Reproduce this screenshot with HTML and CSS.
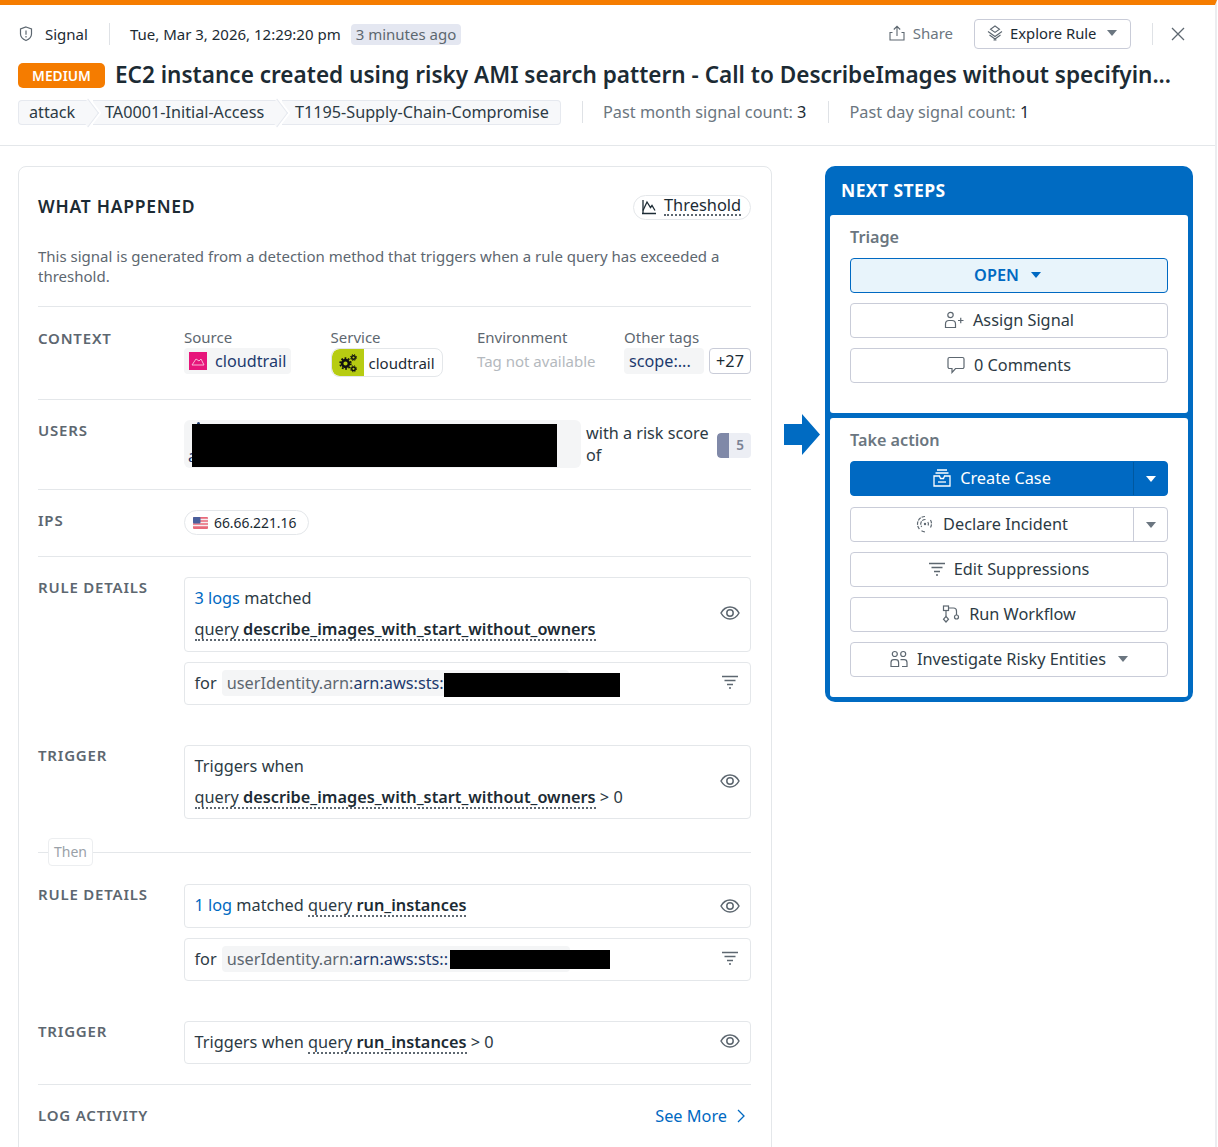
FILE: index.html
```html
<!DOCTYPE html>
<html lang="en">
<head>
<meta charset="utf-8">
<title>Signal</title>
<link rel="stylesheet" href="styles.css">
</head>
<body>
<div class="page">
<header class="head">
  <div class="row-meta">
    <svg class="ic-shield" viewBox="0 0 14 16" width="14" height="16"><path d="M7 1l5.500 2v5c0 3-2.400 5.200-5.500 6.500C3.900 13.200 1.500 11 1.500 8V3z" fill="none" stroke="#5d6770" stroke-width="1.200"/><path d="M7 4.500v4.200M7 10v1.400" stroke="#5d6770" stroke-width="1.200"/></svg>
    <span class="meta-kind">Signal</span>
    <span class="vsep sep-a"></span>
    <span class="meta-date">Tue, Mar 3, 2026, 12:29:20 pm</span>
    <span class="ago">3 minutes ago</span>
    <span class="meta-actions">
      <span class="share">
        <svg viewBox="0 0 16 16" width="16" height="16"><path d="M8 11V1.500M4.800 4.500L8 1.300l3.200 3.200M3.500 7.500H1v7.500h14V7.500h-2.500" fill="none" stroke="#5d6770" stroke-width="1.100"/></svg>
        Share
      </span>
      <span class="explore">
        <svg viewBox="0 0 16 16" width="16" height="16"><path d="M8 1L3.500 4.200 8 7.400l4.500-3.200zM1 6.500L8 11.500l7-5M2.500 10L8 14l5.500-4M6.500 15h3" fill="none" stroke="#5d6770" stroke-width="1.100"/></svg>
        Explore Rule
        <i class="caret caret-gray"></i>
      </span>
      <span class="vsep sep-b"></span>
      <svg class="ic-close" viewBox="0 0 14 14" width="14" height="14"><path d="M1 1l12 12M13 1L1 13" stroke="#5d6770" stroke-width="1.300" fill="none"/></svg>
    </span>
  </div>
  <div class="row-title">
    <span class="sev">MEDIUM</span>
    <h1 class="title">EC2 instance created using risky AMI search pattern - Call to DescribeImages without specifyin...</h1>
  </div>
  <div class="row-tags">
    <span class="crumbs">
      <span class="crumb crumb-1">attack</span>
      <span class="crumb crumb-2">TA0001-Initial-Access</span>
      <span class="crumb crumb-3">T1195-Supply-Chain-Compromise</span>
    </span>
    <span class="vsep sep-c"></span>
    <span class="count">Past month signal count: <b>3</b></span>
    <span class="vsep sep-d"></span>
    <span class="count">Past day signal count: <b>1</b></span>
  </div>
</header>

<main class="main">
  <section class="card">
    <div class="card-head">
      <h2 class="card-title">WHAT HAPPENED</h2>
      <span class="thresh">
        <svg viewBox="0 0 16 16" width="16" height="16"><path d="M1 14.500h14M2 11.500L6 3l3.500 5.500L11 6.500l3 5" fill="none" stroke="#1c2b34" stroke-width="1.300"/><path d="M2 1v13.500" stroke="#1c2b34" stroke-width="1.300"/></svg>
        <span class="dotted">Threshold</span>
      </span>
    </div>
    <p class="desc">This signal is generated from a detection method that triggers when a rule query has exceeded a threshold.</p>

    <div class="sec sec-context">
      <div class="lab">CONTEXT</div>
      <div class="ctx">
        <div class="ctx-col">
          <div class="ctx-lab">Source</div>
          <span class="src-tag"><svg viewBox="0 0 18 18" width="18" height="18"><rect width="18" height="18" fill="#e7157b"/><path d="M3 13l4-6 3 2 2-2 3 6z" fill="none" stroke="#f7b6d6" stroke-width="1"/></svg>cloudtrail</span>
        </div>
        <div class="ctx-col">
          <div class="ctx-lab">Service</div>
          <span class="svc-tag"><span class="svc-ic"><svg viewBox="0 0 20 20" width="20" height="20"><circle cx="7.500" cy="10.500" r="3.400" fill="none" stroke="#111" stroke-width="2.600"/><circle cx="7.500" cy="10.500" r="5.400" fill="none" stroke="#111" stroke-width="1.600" stroke-dasharray="1.800 1.600"/><circle cx="15.500" cy="4.500" r="1.800" fill="none" stroke="#111" stroke-width="1.400"/><circle cx="15.500" cy="4.500" r="3" fill="none" stroke="#111" stroke-width="1" stroke-dasharray="1.200 1.200"/><circle cx="15.500" cy="15.800" r="1.800" fill="none" stroke="#111" stroke-width="1.400"/><circle cx="15.500" cy="15.800" r="3" fill="none" stroke="#111" stroke-width="1" stroke-dasharray="1.200 1.200"/></svg></span><span class="svc-name">cloudtrail</span></span>
        </div>
        <div class="ctx-col">
          <div class="ctx-lab">Environment</div>
          <span class="ctx-none">Tag not available</span>
        </div>
        <div class="ctx-col">
          <div class="ctx-lab">Other tags</div>
          <span class="other"><span class="scope">scope:...</span><span class="plus">+27</span></span>
        </div>
      </div>
    </div>

    <div class="sec sec-users">
      <div class="lab">USERS</div>
      <div class="users">
        <span class="user-chip"><i class="user-top"></i><span class="user-text">a</span><span class="redact redact-user"></span></span>
        <span class="risk-text">with a risk score of</span>
        <span class="risk"><i class="risk-bar"></i><span class="risk-num">5</span></span>
      </div>
    </div>

    <div class="sec sec-ips">
      <div class="lab">IPS</div>
      <span class="ip">
        <svg viewBox="0 0 15 12" width="15" height="12"><rect width="15" height="12" rx="1" fill="#e8697a"/><path d="M0 2.500h15M0 5.500h15M0 8.500h15" stroke="#f6eef0" stroke-width="1.300"/><rect width="7.500" height="6.500" rx="1" fill="#4a5f9c"/></svg>
        66.66.221.16
      </span>
    </div>

    <div class="sec sec-rule">
      <div class="lab">RULE DETAILS</div>
      <div class="boxes">
        <div class="box box-two">
          <div class="box-text">
            <div><a class="link">3 logs</a> matched</div>
            <div class="second"><span class="dotted">query <b>describe_images_with_start_without_owners</b></span></div>
          </div>
          <svg class="ic-eye" viewBox="0 0 20 14" width="20" height="14"><use href="#eye"/></svg>
        </div>
        <div class="box box-one">
          <div class="box-text for-row for-up">for <span class="arn arn-a"><span class="arn-key">userIdentity.arn:</span>arn:aws:sts:</span><span class="redact redact-a"></span></div>
          <svg class="ic-filter" viewBox="0 0 16 14" width="16" height="14"><use href="#filter"/></svg>
        </div>
      </div>
    </div>

    <div class="sec sec-trig">
      <div class="lab">TRIGGER</div>
      <div class="boxes">
        <div class="box box-two box-trig">
          <div class="box-text">
            <div>Triggers when</div>
            <div class="second"><span class="dotted">query <b>describe_images_with_start_without_owners</b></span> &gt; 0</div>
          </div>
          <svg class="ic-eye" viewBox="0 0 20 14" width="20" height="14"><use href="#eye"/></svg>
        </div>
      </div>
    </div>

    <div class="then"><span class="then-chip">Then</span></div>

    <div class="sec sec-rule2">
      <div class="lab">RULE DETAILS</div>
      <div class="boxes">
        <div class="box box-one box-tall">
          <div class="box-text"><a class="link">1 log</a> matched <span class="dotted">query <b>run_instances</b></span></div>
          <svg class="ic-eye" viewBox="0 0 20 14" width="20" height="14"><use href="#eye"/></svg>
        </div>
        <div class="box box-one">
          <div class="box-text for-row for-up">for <span class="arn arn-b"><span class="arn-key">userIdentity.arn:</span>arn:aws:sts::</span><span class="redact redact-b"></span></div>
          <svg class="ic-filter" viewBox="0 0 16 14" width="16" height="14"><use href="#filter"/></svg>
        </div>
      </div>
    </div>

    <div class="sec sec-trig2">
      <div class="lab">TRIGGER</div>
      <div class="boxes">
        <div class="box box-one">
          <div class="box-text">Triggers when <span class="dotted">query <b>run_instances</b></span> &gt; 0</div>
          <svg class="ic-eye" viewBox="0 0 20 14" width="20" height="14"><use href="#eye"/></svg>
        </div>
      </div>
    </div>

    <div class="log-row">
      <div class="lab">LOG ACTIVITY</div>
      <a class="see">See More <svg viewBox="0 0 8 14" width="8" height="14"><path d="M1 1l6 6-6 6" fill="none" stroke="#0069c2" stroke-width="1.300"/></svg></a>
    </div>
  </section>

  <div class="arrow-col">
    <svg viewBox="0 0 36 41" width="36" height="41"><path d="M0 10h18V0l18 20.500L18 41V31H0z" fill="#006bc2"/></svg>
  </div>

  <aside class="next">
    <h2 class="next-title">NEXT STEPS</h2>
    <div class="panel panel-triage">
      <div class="panel-lab">Triage</div>
      <div class="btn btn-open">OPEN <i class="caret caret-blue"></i></div>
      <div class="btn">
        <svg viewBox="0 0 20 18" width="20" height="18"><circle cx="6.500" cy="4" r="2.700" fill="none" stroke="#5d6770" stroke-width="1.200"/><path d="M1.500 16.500v-3.500c0-2 1.500-3.500 3.500-3.500h3c2 0 3.500 1.500 3.500 3.500v3.500z" fill="none" stroke="#5d6770" stroke-width="1.200"/><path d="M14 9.500h5.500M16.750 6.750v5.500" stroke="#5d6770" stroke-width="1.200"/></svg>
        Assign Signal
      </div>
      <div class="btn">
        <svg viewBox="0 0 18 18" width="18" height="18"><path d="M2.500 1.500h13a1.500 1.500 0 011.500 1.500v8a1.500 1.500 0 01-1.500 1.500H8.500l-3.500 4v-4H2.500A1.500 1.500 0 011 11V3a1.500 1.500 0 011.500-1.500z" fill="none" stroke="#5d6770" stroke-width="1.200"/></svg>
        0 Comments
      </div>
    </div>
    <div class="panel panel-action">
      <div class="panel-lab">Take action</div>
      <div class="btn btn-split btn-primary">
        <span class="split-main">
          <svg viewBox="0 0 18 18" width="18" height="18"><path d="M4 1h10M2.500 4h13M1 7h5.500l1 2.500h3l1-2.500H17v10H1z" fill="none" stroke="#fff" stroke-width="1.300"/><path d="M5 13h8" stroke="#fff" stroke-width="1.300"/></svg>
          Create Case
        </span>
        <span class="split-side"><i class="caret caret-white"></i></span>
      </div>
      <div class="btn btn-split">
        <span class="split-main">
          <svg viewBox="0 0 18 18" width="18" height="18"><path d="M9 1.500a7.500 7.500 0 00-5.500 12.600M5.500 15.800a7.500 7.500 0 004 1M9.500 4.500a4.500 4.500 0 00-3.800 7.300M14.500 5a7.500 7.500 0 010 7.500M11.800 7a3.500 3.500 0 010 4" fill="none" stroke="#5d6770" stroke-width="1.200" stroke-dasharray="3.500 1"/><circle cx="9" cy="9" r="1.200" fill="#5d6770"/></svg>
          Declare Incident
        </span>
        <span class="split-side"><i class="caret caret-gray"></i></span>
      </div>
      <div class="btn">
        <svg viewBox="0 0 16 14" width="16" height="14"><use href="#filter"/></svg>
        Edit Suppressions
      </div>
      <div class="btn">
        <svg viewBox="0 0 18 18" width="18" height="18"><rect x="1.500" y="1" width="5" height="4.500" fill="none" stroke="#5d6770" stroke-width="1.200"/><path d="M6.500 3h5a3 3 0 013 3v4M4 5.500v6" fill="none" stroke="#5d6770" stroke-width="1.200"/><path d="M4 11.500l2.500 2.700L4 17l-2.500-2.800z" fill="none" stroke="#5d6770" stroke-width="1.200"/><circle cx="14.500" cy="12" r="2" fill="none" stroke="#5d6770" stroke-width="1.200"/></svg>
        Run Workflow
      </div>
      <div class="btn">
        <svg viewBox="0 0 18 18" width="18" height="18"><circle cx="4.800" cy="4" r="2.500" fill="none" stroke="#5d6770" stroke-width="1.200"/><circle cx="13.200" cy="4" r="2.500" fill="none" stroke="#5d6770" stroke-width="1.200"/><path d="M1 16.500V12.500c0-1.600 1.200-2.800 2.800-2.800h2c1.600 0 2.800 1.200 2.800 2.800v4zM10.500 9.700h3.700c1.600 0 2.800 1.200 2.800 2.800v4h-5" fill="none" stroke="#5d6770" stroke-width="1.200"/></svg>
        Investigate Risky Entities
        <i class="caret caret-gray caret-gap"></i>
      </div>
    </div>
  </aside>
</main>
</div>

<svg class="defs" width="0" height="0" aria-hidden="true">
  <symbol id="eye" viewBox="0 0 20 14">
    <path d="M1 7c2.200-4 5.300-6 9-6s6.800 2 9 6c-2.200 4-5.300 6-9 6S3.200 11 1 7z" fill="none" stroke="#5d6770" stroke-width="1.500"/>
    <circle cx="10" cy="7" r="3.200" fill="none" stroke="#5d6770" stroke-width="1.500"/>
  </symbol>
  <symbol id="filter" viewBox="0 0 16 14">
    <path d="M0 1.500h16M2.500 5.500h11M5 9.500h6M7 13h2" fill="none" stroke="#5d6770" stroke-width="1.300"/>
  </symbol>
</svg>
</body>
</html>
```

FILE: styles.css
```css
* { box-sizing: border-box; }
html, body { margin: 0; height: 1147px; overflow: hidden; background: #fff; }
body { font-family: "Noto Sans", sans-serif; font-size: 15px; color: #1c2b34; }
.defs { display: block; height: 0; }
h1, h2, p { margin: 0; }
svg { display: block; flex: none; }

.page { width: 1217px; height: 1147px; border-top: 5px solid #f57c00; overflow: hidden; border-right: 2px solid #ecedf0; }

/* header */
.head { height: 141px; padding: 14px 18px 0; border-bottom: 1px solid #e4e7ea; }
.row-meta { display: flex; align-items: center; height: 30px; }
.ic-shield { margin-left: 1px; margin-right: 1px; margin-top: -1px; }
.meta-kind { margin-left: 11px; }
.vsep { display: block; width: 1px; height: 22px; background: #dfe2e6; flex: none; }
.sep-a { margin: 0 20px 0 21px; }
.ago { margin-left: 10px; background: #e4e7f1; color: #5d6770; border-radius: 4px; padding: 0 5px; height: 21px; line-height: 21px; }
.meta-actions { margin-left: auto; display: flex; align-items: center; padding-right: 12px; }
.share { display: flex; align-items: center; gap: 8px; color: #6b7680; margin-right: 21px; padding-bottom: 2px; }
.explore { display: flex; align-items: center; gap: 7px; height: 30px; width: 157px; padding: 0 0 2px 12px; border: 1px solid #c9ccd8; border-radius: 4px; font-size: 14.800px; }
.explore .caret { margin-left: 4px; }
.sep-b { margin: 0 18px 0 21px; }
.caret { display: block; width: 0; height: 0; border-left: 5.500px solid transparent; border-right: 5.500px solid transparent; border-top: 6px solid; flex: none; }
.caret-gray { color: #6b7680; }
.caret-blue { color: #0069c2; }
.caret-white { color: #fff; }

.row-title { display: flex; align-items: center; margin-top: 13px; height: 26px; }
.sev { background: #f57c00; color: #fff; font-weight: 600; font-size: 13.800px; border-radius: 5px; width: 87px; height: 25px; line-height: 25px; text-align: center; flex: none; }
.title { margin: 0 0 0 10px; font-size: 22.550px; font-weight: 600; line-height: 32px; white-space: nowrap; }

.row-tags { display: flex; align-items: center; margin-top: 11px; height: 26px; }
.crumbs { display: flex; align-items: center; gap: 4px; }
.crumb { position: relative; height: 25px; line-height: 23px; background: #f7f8fa; border: 1px solid #e6e9ef; padding: 0 10px; font-size: 16.200px; color: #2c3a44; white-space: nowrap; }
.crumb-1 { border-radius: 4px 0 0 4px; border-right: 0; width: 71px; }
.crumb-2 { border-left: 0; border-right: 0; width: 185px; padding-left: 12px; }
.crumb-3 { border-radius: 0 4px 4px 0; border-left: 0; width: 279px; padding-left: 13px; }
.crumb-1::after, .crumb-2::after { content: ""; position: absolute; right: -8px; top: 3px; width: 17px; height: 17px; background: #f7f8fa; border-top: 1px solid #e6e9ef; border-right: 1px solid #e6e9ef; box-shadow: 2px -2px 0 #fff; transform: rotate(45deg) skew(8deg, 8deg); z-index: 1; }
.sep-c { margin: 0 20px 0 21px; }
.sep-d { margin: 0 20px 0 22px; }
.count { color: #6b7680; font-size: 16.300px; }
.count b { font-weight: 400; color: #1c2b34; }

/* main */
.main { display: grid; grid-template-columns: 754px 53px 368px; padding: 20px 0 0 18px; align-items: start; }
.card { height: 1100px; border: 1px solid #e4e7ea; border-radius: 8px; padding: 20px 20px 0 19px; }
.card-head { display: flex; justify-content: space-between; align-items: center; height: 40px; margin-top: 0; }
.card-title { font-size: 17.500px; font-weight: 600; letter-spacing: .75px; line-height: 38px; height: 40px; }
.thresh { display: flex; align-items: center; gap: 7px; height: 25px; width: 118px; padding: 0 0 4px 7px; border: 1px solid #e4e7ea; border-radius: 13px; font-size: 16.400px; }
.thresh svg { margin-top: 3px; }
.dotted { border-bottom: 2px dotted #5d6770; line-height: 19px; display: inline-block; }
.desc { margin-top: 19px; line-height: 20px; color: #5d6770; font-size: 15px; height: 40px; }

.sec { display: flex; border-top: 1px solid #e4e7ea; }
.lab { width: 146px; flex: none; font-weight: 600; color: #5d6770; font-size: 15px; letter-spacing: .8px; line-height: 18px; }
.sec-context { margin-top: 20px; height: 93px; padding-top: 22px; }
.ctx { flex: 1; display: grid; grid-template-columns: 146.500px 146.500px 147px 1fr; }
.ctx-lab { color: #5d6770; font-size: 15px; line-height: 20px; margin-top: -2px; }
.ctx-col { display: flex; flex-direction: column; align-items: flex-start; }
.src-tag { display: flex; align-items: center; gap: 8px; background: #f4f5f6; border-radius: 4px; height: 26px; padding: 0 5px; margin-top: 1px; color: #1d3a6e; font-size: 16.200px; }
.src-tag svg { width: 18px; height: 18px; }
.svc-tag { display: flex; align-items: center; height: 29px; border: 1px solid #e4e7ea; border-radius: 8px; margin-top: 1px; overflow: hidden; }
.svc-ic { width: 32px; height: 100%; background: #b7cc12; display: flex; align-items: center; justify-content: center; border-radius: 8px 0 0 8px; }
.svc-name { padding: 0 7px 0 5px; font-size: 15px; }
.ctx-none { color: #b4b9be; font-size: 15px; line-height: 26px; margin-top: 1px; }
.other { display: flex; gap: 5px; margin-top: 1px; }
.scope { background: #f4f5f6; border-radius: 4px; width: 80px; height: 26px; line-height: 26px; padding-left: 5px; color: #1d3a6e; font-size: 16.200px; }
.plus { border: 1px solid #c9ccd8; border-radius: 4px; height: 26px; width: 42px; text-align: center; line-height: 24px; font-size: 16.200px; }

.sec-users { height: 90px; padding-top: 21px; }
.users { flex: 1; display: flex; align-items: flex-start; }
.user-chip { position: relative; display: block; width: 397px; height: 48px; margin-top: -1px; background: #f4f5f6; border-radius: 6px; flex: none; }
.user-text { position: absolute; left: 4px; bottom: 1px; color: #1d3a6e; font-size: 16.200px; line-height: 22px; }
.user-top { position: absolute; left: 13px; top: 2px; width: 3px; height: 3px; background: #1d3a6e; border-radius: 2px 2px 0 0; }
.redact { background: #000; display: block; }
.redact-user { position: absolute; left: 8px; top: 4px; width: 365px; height: 43px; }
.risk-text { width: 123px; margin: 1px 0 0 5px; font-size: 16.200px; line-height: 22px; flex: none; color: #2c3a44; }
.risk { display: flex; margin-left: 8px; width: 34px; height: 25px; margin-top: 12px; border-radius: 4px; overflow: hidden; background: #eceef4; }
.risk-bar { display: block; width: 12px; background: #8089a8; border-radius: 4px 0 0 4px; }
.risk-num { flex: 1; text-align: center; line-height: 25px; font-size: 13.500px; font-weight: 600; color: #7a8294; }

.sec-ips { height: 67px; padding-top: 20px; align-items: flex-start; }
.sec-ips .lab { margin-top: 1px; }
.ip { display: flex; align-items: center; gap: 6px; height: 25px; width: 125px; padding-left: 8px; border: 1px solid #e4e7ea; border-radius: 13px; font-size: 13.850px; }

.sec-rule { height: 189px; padding-top: 20px; }
.sec-rule .lab, .sec-trig .lab, .sec-rule2 .lab, .sec-trig2 .lab { margin-top: 1px; }
.sec-trig, .sec-rule2, .sec-trig2 { border-top: 0; }
.sec-trig { height: 93px; }
.sec-rule2 { height: 137px; }
.sec-trig2 { height: 63px; }
.boxes { flex: 1; display: flex; flex-direction: column; gap: 10px; }
.box { display: flex; align-items: center; justify-content: space-between; border: 1px solid #e4e7ea; border-radius: 4px; padding: 0 10px 0 9.500px; font-size: 16.300px; color: #2c3a44; }
.box b { font-weight: 600; color: #1c2b34; }
.box-two { height: 75px; }
.box-two .box-text, .for-up, .box-tall .box-text { padding-bottom: 2px; }
.box-two.box-trig { height: 74px; }
.box-two.box-trig .box-text { padding-bottom: 0; }
.box-one { height: 43px; }
.box-tall { height: 44px; }
.box-tall .ic-eye { margin-bottom: 1px; }
.box-text { line-height: 22px; }
.second { margin-top: 9px; }
.link { color: #0069c2; }
.ic-eye { margin-bottom: 3px; }
.ic-filter { margin: 0 2px 3px 0; }
.for-row { display: flex; align-items: center; gap: 5px; }
.arn { display: block; height: 26px; line-height: 26px; background: #f4f5f6; border-radius: 4px; padding-left: 5px; color: #1d3a6e; }
.arn-key { color: #5d6770; }
.arn-a { width: 347px; }
.arn-b { width: 348px; }
.redact-a { width: 176px; height: 24px; margin: 5px 0 0 -130px; position: relative; }
.redact-b { width: 160px; height: 19px; margin: 2px 0 0 -125px; position: relative; }

.then { display: flex; align-items: center; height: 28px; margin: 0 0 18px 0; border: 0; background: linear-gradient(#e4e7ea, #e4e7ea) 0 50% / 100% 1px no-repeat; }
.then-chip { margin-left: 10px; width: 45px; height: 28px; line-height: 26px; background: #fff; border: 1px solid #eceef0; border-radius: 4px; text-align: center; color: #9aa1a8; font-size: 14px; }

.log-row { border-top: 1px solid #e4e7ea; display: flex; justify-content: space-between; padding-top: 21px; }
.log-row .lab { width: auto; }
.see { display: flex; align-items: center; gap: 10px; color: #0069c2; font-size: 16.300px; padding-right: 6px; line-height: 20px; }

/* arrow */
.arrow-col { display: flex; justify-content: center; padding-top: 248px; padding-left: 6px; }

/* next */
.next { background: #006bc2; border-radius: 10px; padding: 0 5px 5px; }
.next-title { color: #fff; font-size: 17.500px; font-weight: 700; letter-spacing: .4px; line-height: 49px; height: 49px; padding-left: 11px; }
.panel { background: #fff; padding: 11px 20px 0; border-radius: 3px; display: flex; flex-direction: column; }
.panel-triage { height: 198px; margin-bottom: 5px; }
.panel-action { height: 279px; }
.panel-lab { font-weight: 600; color: #6b7680; font-size: 16.200px; line-height: 22px; margin-bottom: 10px; }
.btn { display: flex; align-items: center; justify-content: center; gap: 9px; height: 35px; padding-bottom: 2px; border: 1px solid #c9ccd8; border-radius: 4px; font-size: 16.300px; color: #2c3a44; margin-bottom: 10px; }
.btn-open { background: #e8f4fb; border-color: #0069c2; color: #0069c2; font-weight: 600; gap: 12px; padding-right: 3px; }
.btn-split { padding: 0; gap: 0; justify-content: flex-start; }
.split-main { flex: 1; height: 100%; display: flex; align-items: center; justify-content: center; gap: 9px; padding-bottom: 2px; }
.split-side { width: 34px; height: 100%; display: flex; align-items: center; justify-content: center; border-left: 1px solid #c9ccd8; }
.btn-primary { background: #0069c2; border-color: #0069c2; color: #fff; margin-bottom: 11px; }
.btn-primary .split-side { border-left-color: #00589f; }
.caret-gap { margin-left: 3px; }
```
